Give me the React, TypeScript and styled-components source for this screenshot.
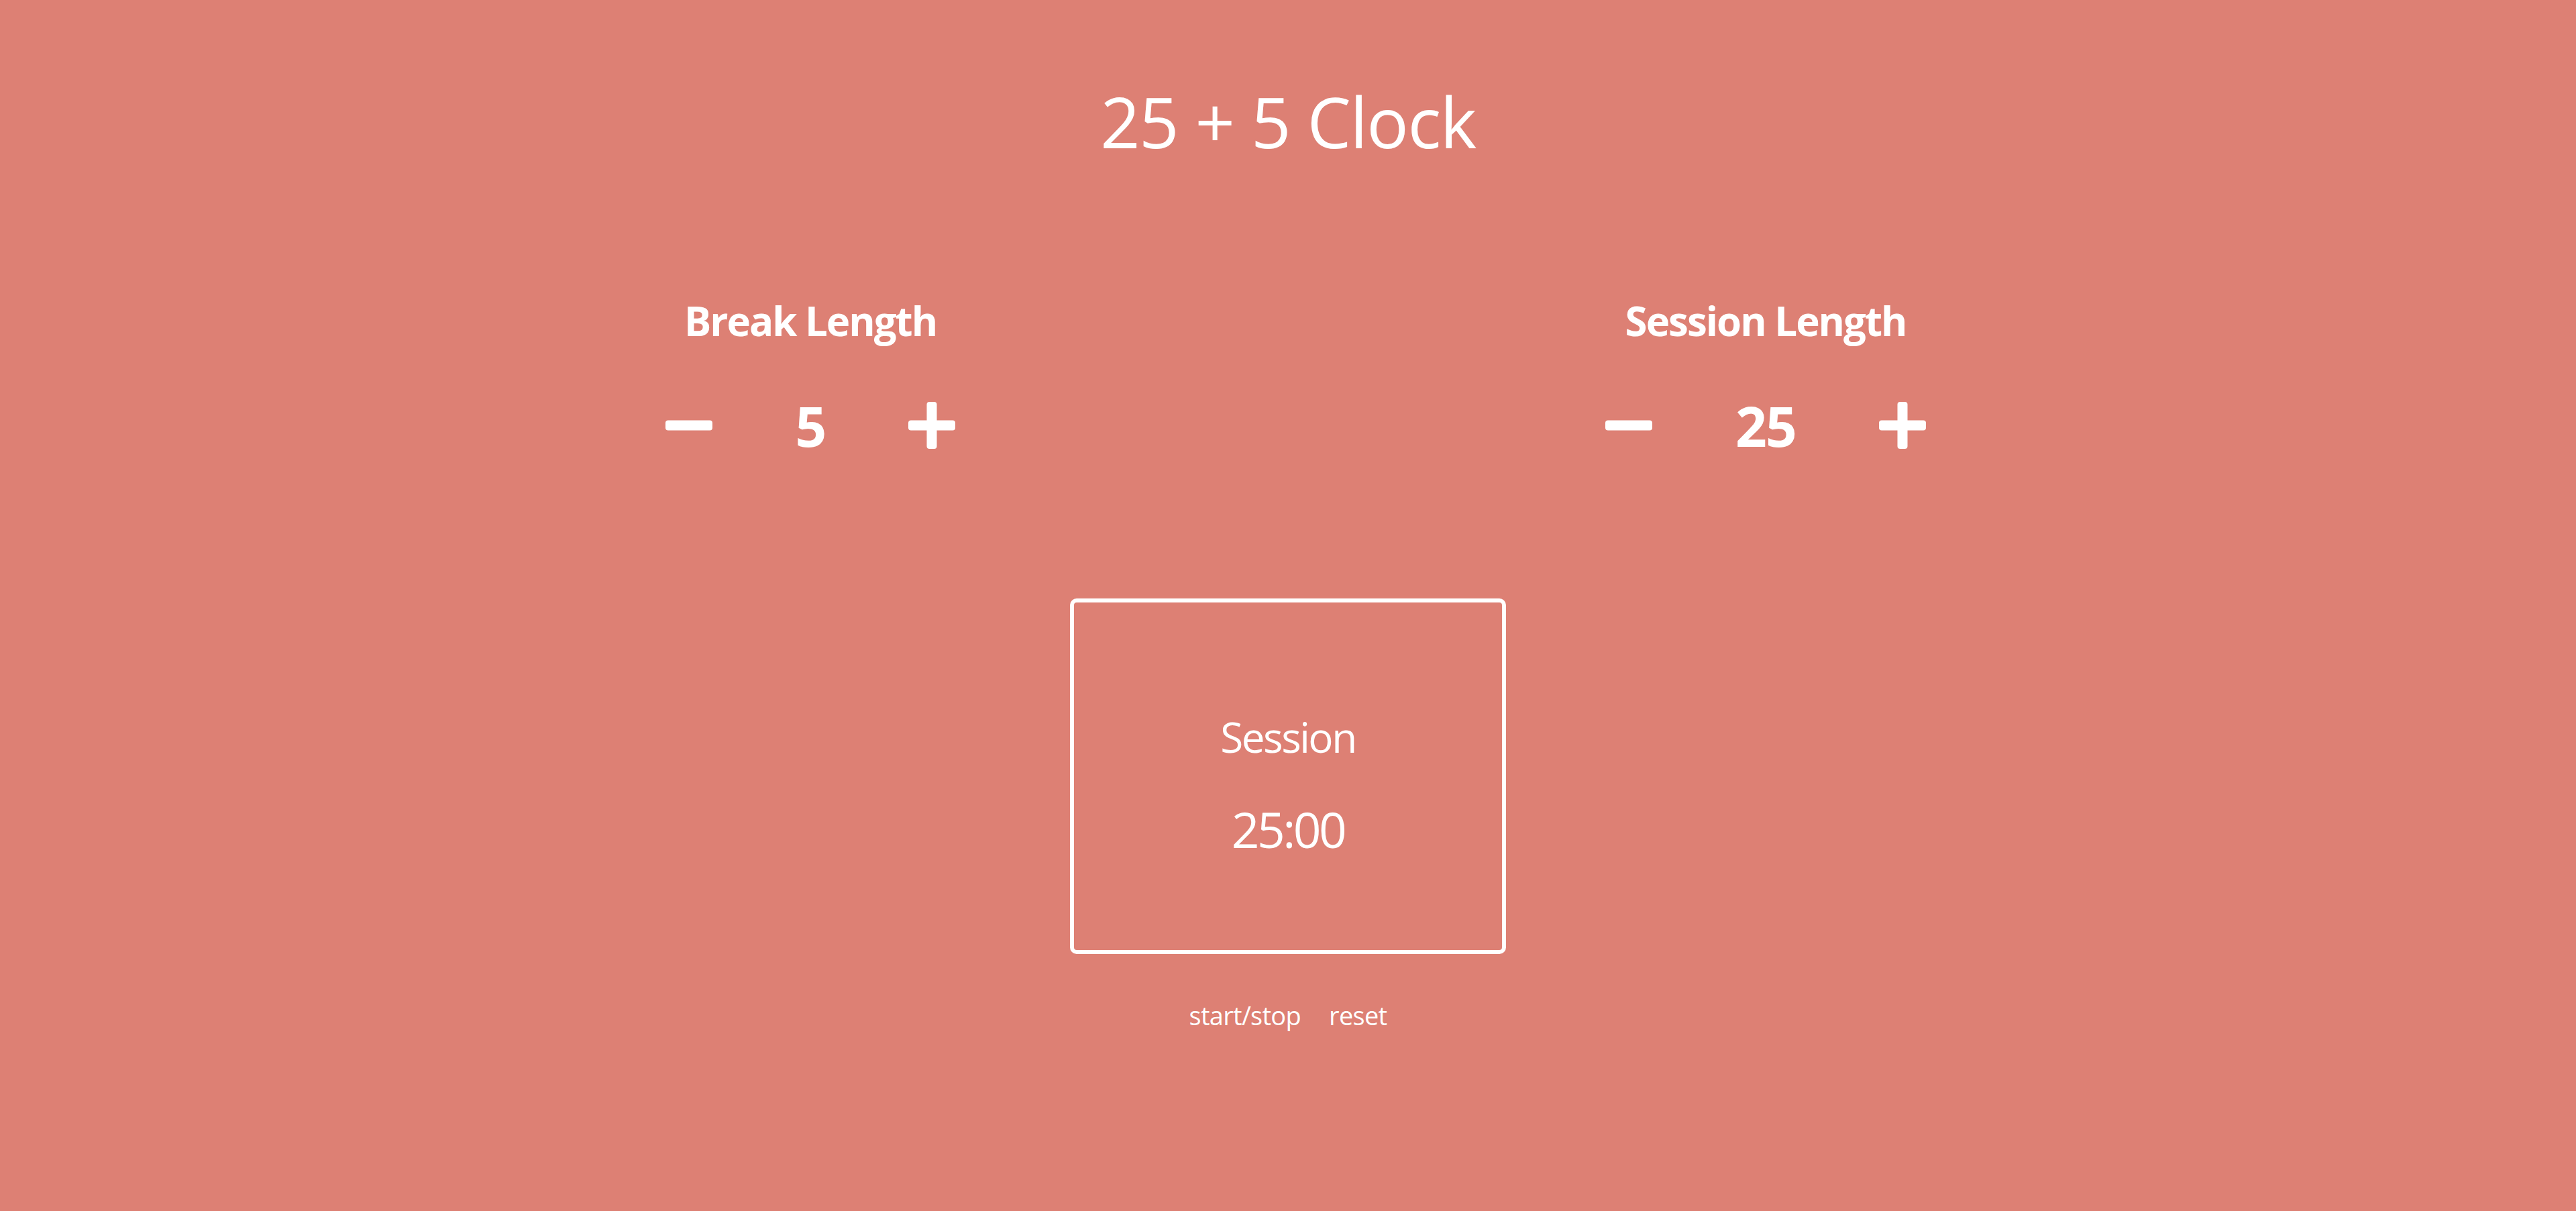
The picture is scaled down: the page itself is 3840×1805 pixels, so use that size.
import React from "react";
import styled, { createGlobalStyle } from "styled-components";

const GlobalStyle = createGlobalStyle`
  html, body {
    margin: 0;
    padding: 0;
    background: #dd8074;
  }
  body {
    font-family: "Open Sans", "Noto Sans", sans-serif;
    font-weight: 500;
    color: #ffffff;
  }
`;

const Page = styled.main`
  min-height: 1805px;
  box-sizing: border-box;
  padding-top: 129px;
  display: flex;
  flex-direction: column;
  align-items: center;
`;

const Title = styled.h1`
  margin: 0;
  font-size: 104px;
  line-height: 104px;
  font-weight: 500;
  letter-spacing: -1.5px;
`;

const Settings = styled.section`
  width: 2848px;
  margin-top: 215px;
  display: grid;
  grid-template-columns: 1fr 1fr;
`;

const Setting = styled.div`
  display: flex;
  flex-direction: column;
  align-items: center;
`;

const Label = styled.h2`
  margin: 0;
  font-size: 60px;
  line-height: 60px;
  font-weight: 700;
  letter-spacing: -2px;
`;

const Controls = styled.div`
  margin-top: 91px;
  height: 70px;
  display: flex;
  align-items: center;
  gap: 124px;
`;

const IconButton = styled.button`
  width: 70px;
  height: 70px;
  padding: 0;
  border: none;
  background: none;
  color: #ffffff;
  cursor: pointer;
  display: flex;
  svg {
    display: block;
  }
`;

const Value = styled.span`
  font-size: 82px;
  line-height: 70px;
  font-weight: 700;
  letter-spacing: -2px;
`;

const TimerBox = styled.div`
  margin-top: 223px;
  width: 650px;
  height: 530px;
  box-sizing: border-box;
  border: 6px solid #ffffff;
  border-radius: 10px;
  padding-top: 169px;
  display: flex;
  flex-direction: column;
  align-items: center;
`;

const TimerLabel = styled.div`
  font-size: 62px;
  line-height: 62px;
  letter-spacing: -2.5px;
`;

const TimeLeft = styled.div`
  margin-top: 70px;
  font-size: 73px;
  line-height: 73px;
  letter-spacing: -3.5px;
`;

const Actions = styled.div`
  margin-top: 72px;
  display: flex;
  gap: 42px;
`;

const TextButton = styled.button`
  padding: 0;
  border: none;
  background: none;
  color: #ffffff;
  font-family: inherit;
  font-weight: inherit;
  font-size: 38px;
  line-height: 38px;
  letter-spacing: -0.7px;
  cursor: pointer;
`;

const Minus = () => (
  <svg width="70" height="70" viewBox="0 0 70 70">
    <rect x="0" y="27.5" width="70" height="15" rx="4" fill="#ffffff" />
  </svg>
);

const Plus = () => (
  <svg width="70" height="70" viewBox="0 0 70 70">
    <rect x="0" y="27.5" width="70" height="15" rx="4" fill="#ffffff" />
    <rect x="27.5" y="0" width="15" height="70" rx="4" fill="#ffffff" />
  </svg>
);

const LengthSetting = ({ label, value }: { label: string; value: number }) => (
  <Setting>
    <Label>{label}</Label>
    <Controls>
      <IconButton aria-label="decrement">
        <Minus />
      </IconButton>
      <Value>{value}</Value>
      <IconButton aria-label="increment">
        <Plus />
      </IconButton>
    </Controls>
  </Setting>
);

export default function App() {
  return (
    <>
      <GlobalStyle />
      <Page>
        <Title>25 + 5 Clock</Title>
        <Settings>
          <LengthSetting label="Break Length" value={5} />
          <LengthSetting label="Session Length" value={25} />
        </Settings>
        <TimerBox>
          <TimerLabel>Session</TimerLabel>
          <TimeLeft>25:00</TimeLeft>
        </TimerBox>
        <Actions>
          <TextButton>start/stop</TextButton>
          <TextButton>reset</TextButton>
        </Actions>
      </Page>
    </>
  );
}
